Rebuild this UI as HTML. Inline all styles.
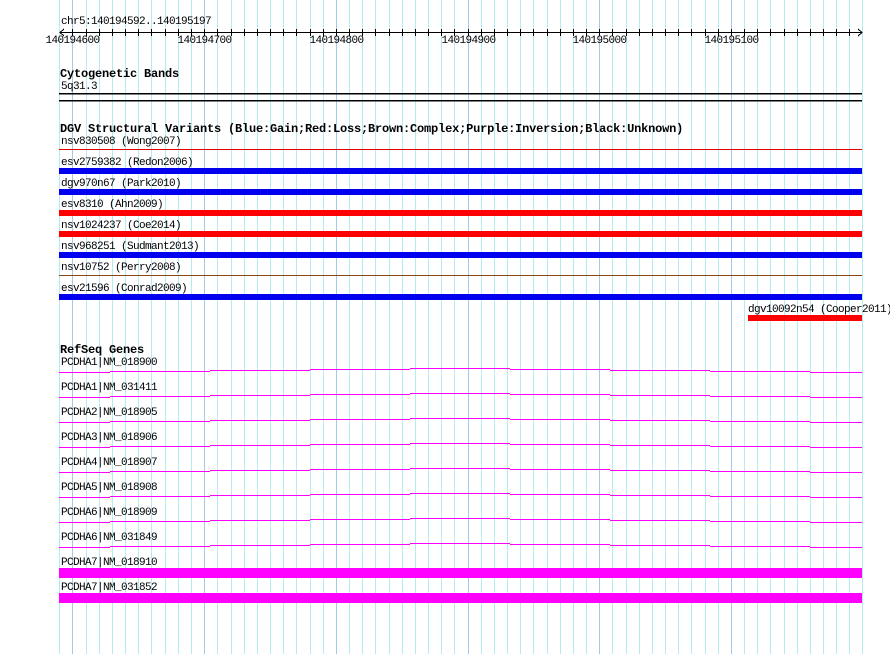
<!DOCTYPE html>
<html><head><meta charset="utf-8"><style>
html,body{margin:0;padding:0;background:#fff;}
svg{display:block;}
text{font-family:"Liberation Mono",monospace;font-size:11px;letter-spacing:-0.6px;fill:#000;}
text.b{font-weight:bold;font-size:12px;letter-spacing:-0.2px;}
</style></head><body>
<svg width="890" height="654" viewBox="0 0 890 654" xmlns="http://www.w3.org/2000/svg" shape-rendering="crispEdges">
<defs>
<path id="gl" d="M59 3.5H110M110 2.5H210M210 1.5H310M310 0.5H410M410 -0.5H510M510 0.5H610M610 1.5H710M710 2.5H810M810 3.5H862" stroke="#ff00ff" stroke-width="1" fill="none"/>
</defs>
<path stroke="#b4eaf2" stroke-width="1" fill="none" d="M59.5 0V654M86.5 0V654M99.5 0V654M112.5 0V654M125.5 0V654M138.5 0V654M151.5 0V654M165.5 0V654M178.5 0V654M191.5 0V654M217.5 0V654M231.5 0V654M244.5 0V654M257.5 0V654M270.5 0V654M283.5 0V654M296.5 0V654M310.5 0V654M323.5 0V654M349.5 0V654M362.5 0V654M375.5 0V654M389.5 0V654M402.5 0V654M415.5 0V654M428.5 0V654M441.5 0V654M454.5 0V654M481.5 0V654M494.5 0V654M507.5 0V654M520.5 0V654M533.5 0V654M547.5 0V654M560.5 0V654M573.5 0V654M586.5 0V654M612.5 0V654M626.5 0V654M639.5 0V654M652.5 0V654M665.5 0V654M678.5 0V654M691.5 0V654M705.5 0V654M718.5 0V654M744.5 0V654M757.5 0V654M770.5 0V654M784.5 0V654M797.5 0V654M810.5 0V654M823.5 0V654M836.5 0V654M849.5 0V654M862.5 0V654"/>
<path stroke="#a4c8ec" stroke-width="1" fill="none" d="M72.5 0V654M204.5 0V654M336.5 0V654M468.5 0V654M599.5 0V654M731.5 0V654"/>
<!-- ruler -->
<text x="61" y="24">chr5:140194592..140195197</text>
<line x1="60" y1="32.5" x2="862" y2="32.5" stroke="#000"/>
<path stroke="#000" stroke-width="1" fill="none" d="M72.5 29V36M86.5 29V36M99.5 29V36M112.5 29V36M125.5 29V36M138.5 29V36M151.5 29V36M165.5 29V36M178.5 29V36M191.5 29V36M204.5 29V36M217.5 29V36M231.5 29V36M244.5 29V36M257.5 29V36M270.5 29V36M283.5 29V36M296.5 29V36M310.5 29V36M323.5 29V36M336.5 29V36M349.5 29V36M362.5 29V36M375.5 29V36M389.5 29V36M402.5 29V36M415.5 29V36M428.5 29V36M441.5 29V36M454.5 29V36M468.5 29V36M481.5 29V36M494.5 29V36M507.5 29V36M520.5 29V36M533.5 29V36M547.5 29V36M560.5 29V36M573.5 29V36M586.5 29V36M599.5 29V36M612.5 29V36M626.5 29V36M639.5 29V36M652.5 29V36M665.5 29V36M678.5 29V36M691.5 29V36M705.5 29V36M718.5 29V36M731.5 29V36M744.5 29V36M757.5 29V36M770.5 29V36M784.5 29V36M797.5 29V36M810.5 29V36M823.5 29V36M836.5 29V36M849.5 29V36"/>
<polyline points="64,29 60,32.5 64,36" fill="none" stroke="#000"/>
<polyline points="858,29 862,32.5 858,36" fill="none" stroke="#000"/>
<text x="72.5" y="43" text-anchor="middle">140194600</text>
<text x="204.5" y="43" text-anchor="middle">140194700</text>
<text x="336.5" y="43" text-anchor="middle">140194800</text>
<text x="468.5" y="43" text-anchor="middle">140194900</text>
<text x="599.5" y="43" text-anchor="middle">140195000</text>
<text x="731.5" y="43" text-anchor="middle">140195100</text>
<!-- cytogenetic -->
<text class="b" x="60" y="77">Cytogenetic Bands</text>
<text x="61" y="89">5q31.3</text>
<rect x="59" y="93" width="803" height="1.5" fill="#000"/>
<rect x="59" y="100" width="803" height="1.5" fill="#000"/>
<!-- DGV -->
<text class="b" x="60" y="132">DGV Structural Variants (Blue:Gain;Red:Loss;Brown:Complex;Purple:Inversion;Black:Unknown)</text>
<text x="61" y="144">nsv830508 (Wong2007)</text>
<rect x="59" y="149" width="803" height="1" fill="#e00000"/>
<text x="61" y="165">esv2759382 (Redon2006)</text>
<rect x="59" y="168" width="803" height="6" fill="#0000ee"/>
<text x="61" y="186">dgv970n67 (Park2010)</text>
<rect x="59" y="189" width="803" height="6" fill="#0000ee"/>
<text x="61" y="207">esv8310 (Ahn2009)</text>
<rect x="59" y="210" width="803" height="6" fill="#ff0000"/>
<text x="61" y="228">nsv1024237 (Coe2014)</text>
<rect x="59" y="231" width="803" height="6" fill="#ff0000"/>
<text x="61" y="249">nsv968251 (Sudmant2013)</text>
<rect x="59" y="252" width="803" height="6" fill="#0000ee"/>
<text x="61" y="270">nsv10752 (Perry2008)</text>
<rect x="59" y="275" width="803" height="1" fill="#8b4513"/>
<text x="61" y="291">esv21596 (Conrad2009)</text>
<rect x="59" y="294" width="803" height="6" fill="#0000ee"/>
<text x="748" y="312">dgv10092n54 (Cooper2011)</text>
<rect x="748" y="315" width="114" height="6" fill="#ff0000"/>
<!-- RefSeq -->
<text class="b" x="60" y="353">RefSeq Genes</text>
<text x="61" y="365">PCDHA1|NM_018900</text>
<use href="#gl" transform="translate(0,369)"/>
<text x="61" y="390">PCDHA1|NM_031411</text>
<use href="#gl" transform="translate(0,394)"/>
<text x="61" y="415">PCDHA2|NM_018905</text>
<use href="#gl" transform="translate(0,419)"/>
<text x="61" y="440">PCDHA3|NM_018906</text>
<use href="#gl" transform="translate(0,444)"/>
<text x="61" y="465">PCDHA4|NM_018907</text>
<use href="#gl" transform="translate(0,469)"/>
<text x="61" y="490">PCDHA5|NM_018908</text>
<use href="#gl" transform="translate(0,494)"/>
<text x="61" y="515">PCDHA6|NM_018909</text>
<use href="#gl" transform="translate(0,519)"/>
<text x="61" y="540">PCDHA6|NM_031849</text>
<use href="#gl" transform="translate(0,544)"/>
<text x="61" y="565">PCDHA7|NM_018910</text>
<rect x="59" y="568" width="803" height="10" fill="#ff00ff"/>
<text x="61" y="590">PCDHA7|NM_031852</text>
<rect x="59" y="593" width="803" height="10" fill="#ff00ff"/>
</svg>
</body></html>
